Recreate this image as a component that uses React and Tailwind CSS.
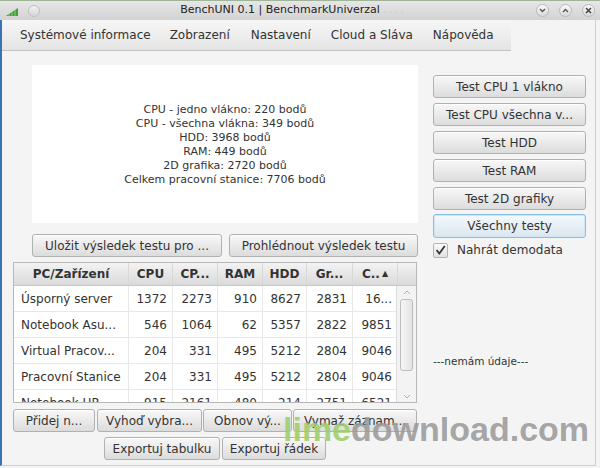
import React from "react";

const btn =
  "flex items-center justify-center rounded-[3px] border border-[#b1b1b1] bg-linear-to-b from-[#f8f8f8] to-[#dcdcdc] shadow-[inset_0_1px_0_#ffffff] text-[12px] text-[#333] whitespace-nowrap";

const cols = [115, 44, 45, 45, 44, 46, 45];
const headers = ["PC/Zařízení", "CPU", "CP...", "RAM", "HDD", "Gr...", "C.."];

const rows = [
  ["Úsporný server", "1372", "2273", "910", "8627", "2831", "16..."],
  ["Notebook Asu...", "546", "1064", "62", "5357", "2822", "9851"],
  ["Virtual Pracov...", "204", "331", "495", "5212", "2804", "9046"],
  ["Pracovní Stanice", "204", "331", "495", "5212", "2804", "9046"],
  ["Notebook HP", "915", "2161", "480", "214", "2751", "6521"],
];

const results = [
  "CPU - jedno vlákno: 220 bodů",
  "CPU - všechna vlákna: 349 bodů",
  "HDD: 3968 bodů",
  "RAM: 449 bodů",
  "2D grafika: 2720 bodů",
  "Celkem pracovní stanice: 7706 bodů",
];

const TitleButton = ({ children }) => (
  <div className="w-[13px] h-[13px] rounded-full border border-[#b9b9b9] bg-linear-to-b from-[#fafafa] to-[#d9d9d9] flex items-center justify-center">
    {children}
  </div>
);

export default function App() {
  return (
    <div
      className="relative w-[600px] h-[468px] overflow-hidden bg-[#f4f4f4] text-[#333]"
      style={{ fontFamily: '"DejaVu Sans", "Liberation Sans", sans-serif' }}
    >
      {/* title bar */}
      <div className="h-[20px] flex items-center bg-linear-to-b from-[#e6e6e6] to-[#d3d3d3] border-t border-[#9fb59a] relative">
        <svg width="14" height="12" viewBox="0 0 14 12" className="ml-[5px]">
          <path d="M1 11 L13 3 L13 11 Z" fill="#3f9d3a" />
          <path d="M4 11 L4 9 M7 11 L7 7 M10 11 L10 5" stroke="#8fd07f" strokeWidth="1" />
        </svg>
        <div className="ml-[9px] w-[12px] h-[12px] rounded-full border border-[#bdbdbd] bg-linear-to-b from-[#f3f3f3] to-[#d6d6d6]" />
        <div className="flex-1 flex justify-center text-[11px] text-[#222] pl-[10px]">
          <span>BenchUNI 0.1 | BenchmarkUniverzal</span>
          <span className="text-[#c6c6c6] ml-[4px] tracking-[2px]">....</span>
        </div>
        <div className="flex items-center gap-[10px] mr-[5px]">
          <TitleButton>
            <svg width="7" height="5" viewBox="0 0 7 5">
              <path d="M1 1 L3.5 3.5 L6 1" fill="none" stroke="#555" strokeWidth="1.4" />
            </svg>
          </TitleButton>
          <TitleButton>
            <svg width="7" height="5" viewBox="0 0 7 5">
              <path d="M1 4 L3.5 1.5 L6 4" fill="none" stroke="#555" strokeWidth="1.4" />
            </svg>
          </TitleButton>
          <TitleButton>
            <svg width="7" height="7" viewBox="0 0 7 7">
              <path d="M1 1 L6 6 M6 1 L1 6" fill="none" stroke="#444" strokeWidth="1.5" />
            </svg>
          </TitleButton>
        </div>
      </div>

      {/* window body */}
      <div className="h-[446px] w-[596px] border-l-2 border-l-[#3a72b4] border-r border-r-[#cfcfcf] border-b border-b-[#cfcfcf] flex flex-col">
        {/* menu bar */}
        <div className="h-[31px] w-[509px] flex items-center gap-[18px] pl-[18px] text-[12px] text-[#333] bg-linear-to-b from-[#f7f7f7] to-[#e4e4e4] border-b border-[#c4c4c4]">
          <span>Systémové informace</span>
          <span className="ml-[1px]">Zobrazení</span>
          <span className="ml-[3px]">Nastavení</span>
          <span className="ml-[2px]">Cloud a Sláva</span>
          <span className="ml-[2px]">Nápověda</span>
        </div>

        <div className="flex">
          {/* left column */}
          <div className="ml-[11px] w-[406px] flex flex-col">
            <div className="mt-[14px] ml-[19px] w-[386px] h-[158px] bg-white flex flex-col items-center justify-center text-[11px] leading-[14px] text-[#333] pt-[2px]">
              {results.map((r) => (
                <div key={r}>{r}</div>
              ))}
            </div>

            <div className="mt-[11px] ml-[19px] flex gap-[7px]">
              <div className={`${btn} w-[190px] h-[23px]`}>Uložit výsledek testu pro ...</div>
              <div className={`${btn} w-[189px] h-[23px]`}>Prohlédnout výsledek testu</div>
            </div>

            {/* table */}
            <div className="mt-[5px] w-[404px] h-[141px] border border-[#b8b8b8] bg-white overflow-hidden flex flex-col text-[12px]">
              <div className="flex h-[23px] shrink-0 bg-linear-to-b from-[#f3f3f3] to-[#dadada] border-b border-[#c6c6c6]">
                {headers.map((h, i) => (
                  <div
                    key={h}
                    style={{ width: cols[i] }}
                    className="flex items-center justify-center font-bold text-[#333] border-r border-[#d8d8d8] shrink-0"
                  >
                    {h}
                    {i === 6 && <span className="text-[8px] ml-[2px]">▲</span>}
                  </div>
                ))}
                <div className="flex-1" />
              </div>
              <div className="flex flex-1 min-h-0">
                <div className="w-[382px] overflow-hidden">
                  {rows.map((r, ri) => (
                    <div key={ri} className="flex h-[26px] border-b border-[#e8e8e8]">
                      {r.map((c, ci) => (
                        <div
                          key={ci}
                          style={{ width: cols[ci] }}
                          className={`flex items-center shrink-0 border-r border-[#e8e8e8] ${
                            ci === 0 ? "pl-[7px]" : "justify-end pr-[5px]"
                          }`}
                        >
                          {c}
                        </div>
                      ))}
                    </div>
                  ))}
                </div>
                {/* scrollbar */}
                <div className="w-[20px] border-l border-[#dcdcdc] bg-[#f3f3f3] flex flex-col items-center">
                  <svg width="8" height="5" viewBox="0 0 8 5" className="mt-[4px]">
                    <path d="M1 4 L4 1 L7 4" fill="none" stroke="#b0b0b0" strokeWidth="1" />
                  </svg>
                  <div className="mt-[4px] w-[13px] h-[72px] rounded-[3px] border border-[#bdbdbd] bg-linear-to-r from-[#f7f7f7] to-[#e3e3e3]" />
                  <div className="flex-1" />
                  <svg width="8" height="5" viewBox="0 0 8 5" className="mb-[3px]">
                    <path d="M1 1 L4 4 L7 1" fill="none" stroke="#b0b0b0" strokeWidth="1" />
                  </svg>
                </div>
              </div>
            </div>

            <div className="mt-[6px] flex gap-[1px]">
              <div className={`${btn} w-[82px] h-[23px]`}>Přidej n...</div>
              <div className={`${btn} w-[105px] h-[23px] ml-[1px]`}>Vyhoď vybra...</div>
              <div className={`${btn} w-[89px] h-[23px]`}>Obnov vý...</div>
              <div className={`${btn} w-[124px] h-[23px]`}>Vymaž záznam...</div>
            </div>
            <div className="mt-[5px] flex justify-center gap-[2px] w-[404px]">
              <div className={`${btn} w-[116px] h-[23px]`}>Exportuj tabulku</div>
              <div className={`${btn} w-[104px] h-[23px]`}>Exportuj řádek</div>
            </div>
          </div>

          {/* right column */}
          <div className="ml-[14px] w-[153px] flex flex-col pt-[24px]">
            <div className={`${btn} h-[23px]`}>Test CPU 1 vlákno</div>
            <div className={`${btn} h-[23px] mt-[5px]`}>Test CPU všechna v...</div>
            <div className={`${btn} h-[23px] mt-[5px]`}>Test HDD</div>
            <div className={`${btn} h-[23px] mt-[5px]`}>Test RAM</div>
            <div className={`${btn} h-[23px] mt-[5px]`}>Test 2D grafiky</div>
            <div className="mt-[4px] h-[24px] rounded-[3px] border border-[#86bfe3] bg-linear-to-b from-[#f4f9fc] to-[#dbe6ee] shadow-[inset_0_0_0_1px_#cfe7f6] flex items-center justify-center text-[12px] text-[#333]">
              Všechny testy
            </div>
            <div className="mt-[3px] flex items-center">
              <div className="w-[15px] h-[15px] rounded-[2px] border border-[#b3b3b3] bg-linear-to-b from-[#fbfbfb] to-[#e2e2e2] flex items-center justify-center">
                <svg width="11" height="10" viewBox="0 0 11 10">
                  <path d="M1.5 5 L4.3 8.5 L9.8 1" fill="none" stroke="#333" strokeWidth="1.8" />
                </svg>
              </div>
              <span className="ml-[9px] text-[12px]">Nahrát demodata</span>
            </div>
            <div className="mt-[95px] text-[10.5px] text-[#333]">---nemám údaje---</div>
          </div>
        </div>
      </div>

      {/* watermark */}
      <div
        className="absolute left-[283px] top-[412px] text-[34px] font-bold leading-none tracking-[0px] pointer-events-none"
        style={{ fontFamily: '"Liberation Sans", Arial, sans-serif' }}
      >
        <span className="text-[#9fcf6a]/90">lime</span>
        <span className="text-[#9b9b9b]/90">download.com</span>
      </div>
    </div>
  );
}
